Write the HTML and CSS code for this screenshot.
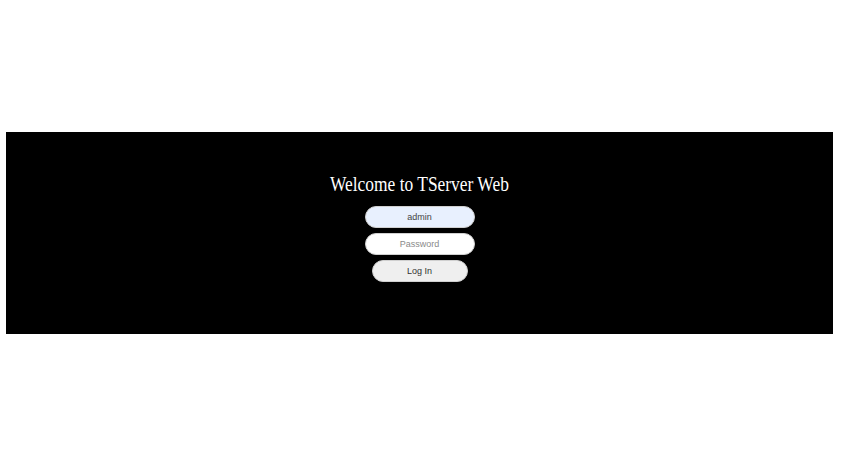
FILE: index.html
```html
<!DOCTYPE html>
<html>
<head>
<meta charset="utf-8">
<title>TServer Web</title>
<link rel="stylesheet" href="styles.css">
</head>
<body>
<div class="panel">
  <h1 class="title">Welcome to TServer Web</h1>
  <form class="login">
    <input class="field field-filled" type="text" value="admin">
    <input class="field" type="password" placeholder="Password">
    <button class="btn" type="button">Log In</button>
  </form>
</div>
</body>
</html>
```
FILE: styles.css
```css
html, body {
  margin: 0;
  padding: 0;
  background: #ffffff;
}
.panel {
  margin: 132px 10px 0 6px;
  height: 202px;
  background: #000000;
  display: flex;
  flex-direction: column;
  align-items: center;
  padding-top: 40px;
  box-sizing: border-box;
}
.title {
  margin: 0;
  font-family: "Liberation Serif", "Times New Roman", serif;
  font-weight: normal;
  font-size: 21.5px;
  line-height: 24px;
  color: #ffffff;
  transform: scaleX(0.81);
}
.login {
  display: flex;
  flex-direction: column;
  align-items: center;
  gap: 5px;
  margin-top: 10px;
}
.field {
  width: 110px;
  height: 22px;
  box-sizing: border-box;
  border: 1px solid #d0d0d0;
  border-radius: 11px;
  background: #ffffff;
  text-align: center;
  font-family: "Liberation Sans", Arial, sans-serif;
  font-size: 9px;
  color: #444444;
  padding: 0 8px;
  outline: none;
}
.field::placeholder {
  color: #8a8a8a;
}
.field-filled {
  background: #e8f0fe;
}
.btn {
  width: 96px;
  height: 22px;
  box-sizing: border-box;
  border: 1px solid #d0d0d0;
  border-radius: 11px;
  background: #efefef;
  font-family: "Liberation Sans", Arial, sans-serif;
  font-size: 9px;
  color: #333333;
  padding: 0;
}
```
